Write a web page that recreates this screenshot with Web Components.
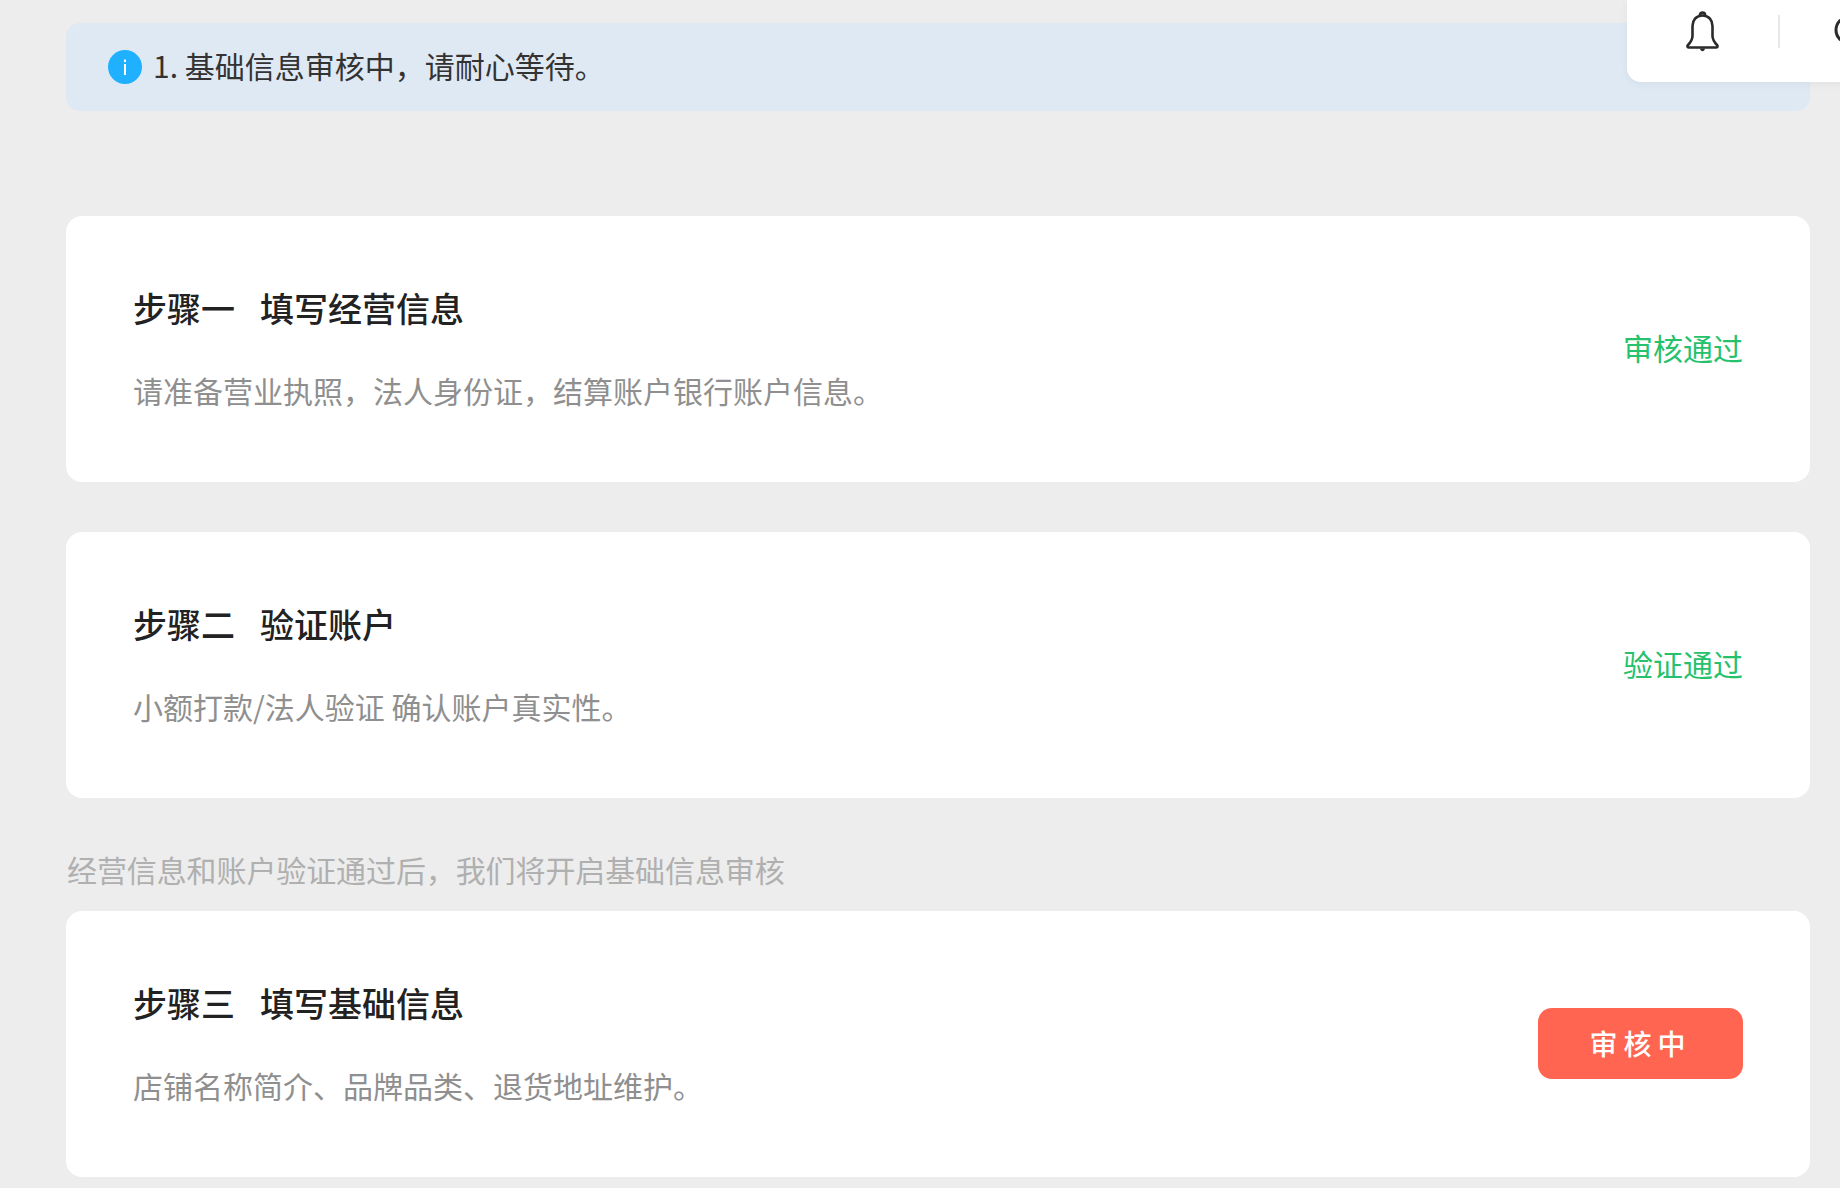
<!DOCTYPE html>
<html lang="zh-CN">
<head>
<meta charset="utf-8">
<title>审核进度</title>
<style>
    html, body {
        margin: 0;
        padding: 0;
        height: 100%;
        overflow: hidden;
        background-color: #ededed;
        font-family: "Noto Sans CJK SC", "Noto Sans", sans-serif;
    }
</style>
</head>
<body>
<review-page>
    <top-toolbar slot="toolbar"></top-toolbar>
    <notice-bar slot="notice">1. 基础信息审核中，请耐心等待。</notice-bar>

    <step-card>
        <span slot="title">步骤一&nbsp;&nbsp;&nbsp;填写经营信息</span>
        <span slot="desc">请准备营业执照，法人身份证，结算账户银行账户信息。</span>
        <step-status slot="status">审核通过</step-status>
    </step-card>

    <step-card>
        <span slot="title">步骤二&nbsp;&nbsp;&nbsp;验证账户</span>
        <span slot="desc">小额打款/法人验证 确认账户真实性。</span>
        <step-status slot="status">验证通过</step-status>
    </step-card>

    <step-hint>经营信息和账户验证通过后，我们将开启基础信息审核</step-hint>

    <step-card>
        <span slot="title">步骤三&nbsp;&nbsp;&nbsp;填写基础信息</span>
        <span slot="desc">店铺名称简介、品牌品类、退货地址维护。</span>
        <step-button slot="status">审核中</step-button>
    </step-card>
</review-page>

<script>
class ReviewPage extends HTMLElement {
    constructor() {
        super();
        this.attachShadow({ mode: "open" }).innerHTML = `
            <style>
                :host {
                    display: block;
                    padding: 23px 30px 0 66px;
                }
                .steps {
                    display: flex;
                    flex-direction: column;
                    margin-top: 105px;
                }
            </style>
            <slot name="toolbar"></slot>
            <slot name="notice"></slot>
            <div class="steps"><slot></slot></div>
        `;
    }
}

class TopToolbar extends HTMLElement {
    constructor() {
        super();
        this.attachShadow({ mode: "open" }).innerHTML = `
            <style>
                :host {
                    display: flex;
                    align-items: flex-start;
                    position: absolute;
                    top: 0;
                    left: 1627px;
                    width: 260px;
                    height: 82px;
                    box-sizing: border-box;
                    padding: 11px 0 0 59px;
                    background-color: #fff;
                    border-radius: 0 0 0 14px;
                    box-shadow: 0 2px 10px rgba(0, 0, 0, 0.05);
                }
                .divider {
                    width: 2px;
                    height: 33px;
                    margin: 4px 0 0 58px;
                    background-color: #e8e8e8;
                }
                .search {
                    margin: 4px 0 0 54px;
                }
            </style>
            <svg width="34" height="41" viewBox="0 0 34 41" fill="none" stroke="#2b2b2b" stroke-width="2.6" stroke-linejoin="round">
                <path d="M16.5 4.5C10 4.5 6.5 9.5 6.5 15V25C6.5 29 4 32 1.6 34.5Q1 36.5 3 36.5H30Q32 36.5 31.4 34.5C29 32 26.5 29 26.5 25V15C26.5 9.5 23 4.5 16.5 4.5Z"/>
                <path d="M13.8 4.5C13.8 .6 19.2 .6 19.2 4.5"/>
                <path d="M14 37.5C14.5 41 18.5 41 19 37.5Z" fill="#2b2b2b" stroke="none"/>
            </svg>
            <div class="divider"></div>
            <svg class="search" width="30" height="30" viewBox="0 0 30 30" fill="none" stroke="#2b2b2b" stroke-width="3">
                <circle cx="15" cy="15" r="13"/>
            </svg>
        `;
    }
}

class NoticeBar extends HTMLElement {
    constructor() {
        super();
        this.attachShadow({ mode: "open" }).innerHTML = `
            <style>
                :host {
                    display: flex;
                    align-items: center;
                    gap: 11px;
                    height: 88px;
                    padding-left: 42px;
                    background-color: #dfe9f4;
                    border-radius: 14px;
                    color: #333;
                    font-size: 30px;
                }
                svg {
                    flex: none;
                }
                span {
                    margin-bottom: 4px;
                }
            </style>
            <svg width="34" height="34" viewBox="0 0 34 34">
                <circle cx="17" cy="17" r="17" fill="#1fb0ff"/>
                <rect x="16" y="9.5" width="2" height="2.6" fill="#fff"/>
                <rect x="16" y="14" width="2" height="11" fill="#fff"/>
            </svg>
            <span><slot></slot></span>
        `;
    }
}

class StepCard extends HTMLElement {
    constructor() {
        super();
        this.attachShadow({ mode: "open" }).innerHTML = `
            <style>
                :host {
                    display: flex;
                    align-items: center;
                    justify-content: space-between;
                    height: 266px;
                    box-sizing: border-box;
                    padding: 0 67px;
                    margin-bottom: 50px;
                    background-color: #fff;
                    border-radius: 16px;
                }
                .text {
                    display: flex;
                    flex-direction: column;
                    gap: 34px;
                }
                .title {
                    color: #222;
                    font-size: 34px;
                    font-weight: 500;
                    line-height: 48px;
                    word-spacing: 0.7px;
                }
                .desc {
                    color: #8f8f8f;
                    font-size: 30px;
                    line-height: 48px;
                }
            </style>
            <div class="text">
                <div class="title"><slot name="title"></slot></div>
                <div class="desc"><slot name="desc"></slot></div>
            </div>
            <slot name="status"></slot>
        `;
    }
}

class StepStatus extends HTMLElement {
    constructor() {
        super();
        this.attachShadow({ mode: "open" }).innerHTML = `
            <style>
                :host {
                    display: block;
                    margin-bottom: 4px;
                    color: #26c16c;
                    font-size: 30px;
                }
            </style>
            <slot></slot>
        `;
    }
}

class StepButton extends HTMLElement {
    constructor() {
        super();
        this.attachShadow({ mode: "open" }).innerHTML = `
            <style>
                :host {
                    display: flex;
                    align-items: center;
                    justify-content: center;
                    width: 205px;
                    height: 71px;
                    box-sizing: border-box;
                    margin-bottom: 1px;
                    padding-bottom: 2px;
                    background-color: #ff6550;
                    border-radius: 14px;
                    color: #fff;
                    font-size: 28px;
                    font-weight: 500;
                    letter-spacing: 6px;
                }
            </style>
            <slot></slot>
        `;
    }
}

class StepHint extends HTMLElement {
    constructor() {
        super();
        this.attachShadow({ mode: "open" }).innerHTML = `
            <style>
                :host {
                    display: block;
                    margin: -16px 0 0;
                    height: 79px;
                    padding-left: 1px;
                    line-height: 74px;
                    color: #b0b0b0;
                    font-size: 30px;
                    letter-spacing: -0.1px;
                }
            </style>
            <slot></slot>
        `;
    }
}

customElements.define("review-page", ReviewPage);
customElements.define("top-toolbar", TopToolbar);
customElements.define("notice-bar", NoticeBar);
customElements.define("step-card", StepCard);
customElements.define("step-status", StepStatus);
customElements.define("step-button", StepButton);
customElements.define("step-hint", StepHint);
</script>
</body>
</html>
